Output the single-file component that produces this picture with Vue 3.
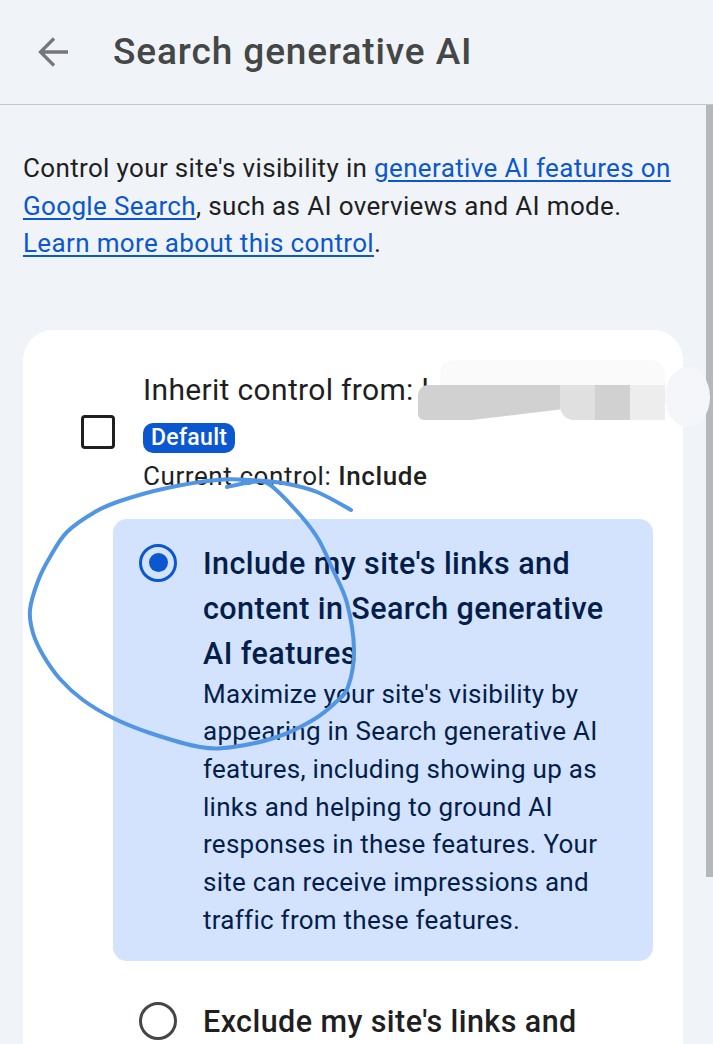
<template>
  <div class="page">
    <header class="top-bar">
      <svg class="back" width="30" height="30" viewBox="0 0 30 30" fill="none">
        <path d="M30 15H3M16 1.5 2.5 15 16 28.5" stroke="#757779" stroke-width="3.3" />
      </svg>
      <h1 class="title">Search generative AI</h1>
    </header>

    <main class="content">
      <p class="intro">
        Control your site's visibility in <a class="link">generative AI features on<br />Google Search</a>, such as AI overviews and AI mode.<br />
        <a class="link">Learn more about this control</a>.
      </p>

      <section class="card">
        <div class="inherit-row">
          <span class="checkbox"></span>
          <div class="inherit-text">
            <div class="inherit-label">Inherit control from: l</div>
            <span class="badge">Default</span>
            <div class="current">Current control: <b class="strong">Include</b></div>
          </div>
        </div>

        <div class="option selected">
          <span class="radio on"><i></i></span>
          <div class="option-text">
            <div class="option-title">Include my site's links and<br />content in Search generative<br />AI features</div>
            <div class="option-desc">
              Maximize your site's visibility by<br />
              appearing in Search generative AI<br />
              features, including showing up as<br />
              links and helping to ground AI<br />
              responses in these features. Your<br />
              site can receive impressions and<br />
              traffic from these features.
            </div>
          </div>
        </div>

        <div class="option">
          <span class="radio"></span>
          <div class="option-text">
            <div class="option-title">Exclude my site's links and</div>
          </div>
        </div>
      </section>
    </main>

    <div class="scroll-thumb"></div>

    <!-- blurred out site name -->
    <div class="redact">
      <span class="r0"></span>
      <span class="r1"></span>
      <span class="r2"></span>
      <span class="r3"></span>
      <span class="r4"></span>
      <span class="r5"></span>
    </div>

    <!-- pen circle drawn over the screenshot -->
    <svg class="scribble" width="713" height="1044" viewBox="0 0 713 1044" fill="none">
      <path :d="penPath" stroke="#5295e3" stroke-width="4" stroke-linecap="round" stroke-linejoin="round" />
    </svg>
  </div>
</template>

<script setup>
// points of the pen stroke, read off the screenshot
const pen = [
  [351, 510], [317, 492], [283, 483], [250, 480], [217, 480], [167, 488],
  [120, 501], [95, 512], [67, 532], [50, 557], [38, 581], [30, 610], [33, 633],
  [43, 655], [60, 679], [83, 700], [113, 718], [150, 733], [200, 747], [233, 747],
  [277, 737], [313, 720], [335, 703], [348, 687], [354, 650], [347, 603], [333, 570],
  [317, 537], [293, 507], [267, 483], [247, 483], [227, 487],
]

// catmull-rom through the points
const penPath = pen.reduce((d, p, i) => {
  if (i === 0) return `M${p[0]} ${p[1]}`
  const a = pen[i - 2] || pen[i - 1]
  const b = pen[i - 1]
  const c = pen[i + 1] || p
  const c1x = b[0] + (p[0] - a[0]) / 6
  const c1y = b[1] + (p[1] - a[1]) / 6
  const c2x = p[0] - (c[0] - b[0]) / 6
  const c2y = p[1] - (c[1] - b[1]) / 6
  return `${d}C${c1x} ${c1y} ${c2x} ${c2y} ${p[0]} ${p[1]}`
}, '')
</script>

<style>
html,
body {
  margin: 0;
  background: #f0f4f9;
}
</style>

<style scoped>
.page {
  position: relative;
  height: 1044px;
  overflow: hidden;
  background: #f0f4f9;
  font-family: Roboto, "Liberation Sans", sans-serif;
  font-size: 26px;
  letter-spacing: 0.35px;
  line-height: 37.7px;
  color: #1f1f1f;
}
.top-bar {
  display: flex;
  align-items: center;
  height: 104px;
  padding-left: 38px;
  border-bottom: 1px solid #c4c7c5;
}
.back {
  flex: none;
}
.title {
  margin: 0 0 0 45px;
  font-size: 37px;
  font-weight: 500;
  letter-spacing: 0.9px;
  line-height: 44px;
  color: #444746;
}
.content {
  padding: 45px 30px 0 23px;
}
.intro {
  margin: 0 0 67px;
}
.link {
  color: #0b57d0;
  text-decoration: underline;
  text-underline-offset: 3px;
}
.card {
  background: #fff;
  border-radius: 30px;
  padding-top: 41px;
  padding-bottom: 40px;
}
.inherit-row {
  display: flex;
  align-items: center;
  gap: 28px;
  padding-left: 58px;
}
.checkbox {
  flex: none;
  box-sizing: border-box;
  width: 34px;
  height: 34px;
  margin-top: -2px;
  border: 3.4px solid #1f1f1f;
  border-radius: 4px;
}
.inherit-text {
  display: flex;
  flex-direction: column;
  align-items: flex-start;
}
.inherit-label {
  font-size: 30px;
  letter-spacing: 0.33px;
  white-space: nowrap;
}
.badge {
  margin: 14px 0 5px;
  padding: 0 8px;
  height: 30px;
  line-height: 30px;
  border-radius: 10px;
  background: #0b57d0;
  color: #fff;
  font-size: 23px;
  letter-spacing: 0.3px;
  font-weight: 500;
}
.current {
  letter-spacing: 0.58px;
}
.strong {
  font-weight: 500;
}
.option {
  display: flex;
  gap: 27px;
  margin: 38px 30px 0 90px;
  padding-left: 26px;
}
.option.selected {
  margin-top: 23px;
  padding: 22px 20px 22px 26px;
  border-radius: 14px;
  background: #d3e3fd;
  color: #041e49;
}
.radio {
  flex: none;
  box-sizing: border-box;
  display: flex;
  align-items: center;
  justify-content: center;
  width: 38px;
  height: 38px;
  margin-top: 3px;
  border: 3.4px solid #444746;
  border-radius: 50%;
}
.radio.on {
  border-color: #0b57d0;
}
.radio i {
  width: 19px;
  height: 19px;
  border-radius: 50%;
  background: #0b57d0;
}
.option-text {
  margin-left: -1px;
}
.option-title {
  font-size: 30.5px;
  font-weight: 500;
  letter-spacing: 0.42px;
  line-height: 45px;
  white-space: nowrap;
}
.option-desc {
  letter-spacing: 0.27px;
  white-space: nowrap;
}
.scroll-thumb {
  position: absolute;
  top: 105px;
  right: 0;
  width: 7px;
  height: 772px;
  background: #b5b7bb;
}
.redact {
  position: absolute;
  left: 418px;
  top: 385px;
  display: flex;
  height: 35px;
}
.redact span {
  display: block;
  height: 100%;
}
.redact .r0 {
  position: absolute;
  left: 22px;
  top: -25px;
  width: 225px;
  height: 25px;
  border-radius: 14px 14px 0 0;
  background: #fafafa;
}
.r1 {
  width: 142px;
  background: #d1d1d1;
  border-radius: 10px 0 0 6px;
  clip-path: polygon(0 0, 100% 0, 100% 70%, 38% 100%, 0 100%);
}
.r2 {
  width: 35px;
  background: #e0e0e0;
  border-radius: 0 0 0 14px;
}
.r3 {
  width: 35px;
  background: #d1d1d1;
}
.r4 {
  width: 35px;
  background: #ededee;
}
.redact .r5 {
  width: 45px;
  margin-top: -18px;
  height: 60px;
  border-radius: 50%;
  background: #f4f6f9;
}
.scribble {
  position: absolute;
  left: 0;
  top: 0;
  pointer-events: none;
}
</style>
